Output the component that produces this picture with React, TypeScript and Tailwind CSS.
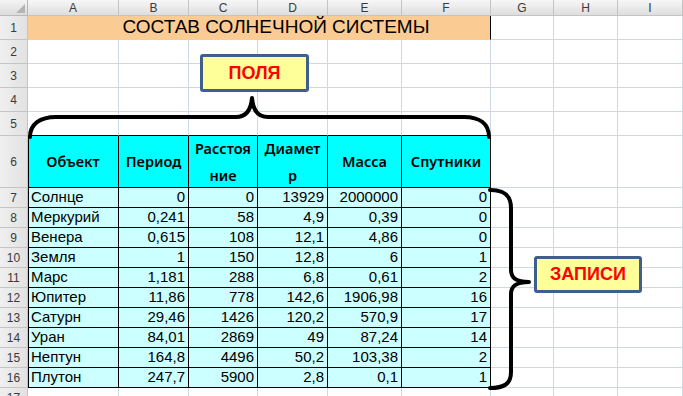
import React from "react";

const cols = ["A", "B", "C", "D", "E", "F", "G", "H", "I"];

const heads = ["Объект", "Период", "Расстоя\nние", "Диамет\nр", "Масса", "Спутники"];

const planets: string[][] = [
    ["Солнце", "0", "0", "13929", "2000000", "0"],
    ["Меркурий", "0,241", "58", "4,9", "0,39", "0"],
    ["Венера", "0,615", "108", "12,1", "4,86", "0"],
    ["Земля", "1", "150", "12,8", "6", "1"],
    ["Марс", "1,181", "288", "6,8", "0,61", "2"],
    ["Юпитер", "11,86", "778", "142,6", "1906,98", "16"],
    ["Сатурн", "29,46", "1426", "120,2", "570,9", "17"],
    ["Уран", "84,01", "2869", "49", "87,24", "14"],
    ["Нептун", "164,8", "4496", "50,2", "103,38", "2"],
    ["Плутон", "247,7", "5900", "2,8", "0,1", "1"],
];

function RowHead({ n }: { n: number }) {
    return (
        <div className="flex items-center justify-center bg-gradient-to-r from-[#efefef] to-[#e2e2e2] border-r border-b border-[#c4c4c4] text-[12px] text-[#3a3a3a]">
            {n}
        </div>
    );
}

function Empty({ black }: { black?: boolean }) {
    return <div className={`border-r border-b ${black ? "border-b-black border-r-[#d0d7e5]" : "border-[#d0d7e5]"}`} />;
}

export default function App() {
    return (
        <div
            className="relative w-[683px] h-[396px] overflow-hidden bg-white"
            style={{ fontFamily: '"Liberation Sans", Arial, sans-serif' }}
        >
            <div className="grid grid-cols-[28px_91px_70px_69px_70px_74px_89px_63px_64px_1fr] grid-rows-[16px_repeat(5,24px)_52px_repeat(10,20px)_20px]">
                {/* Column headers */}
                <div className="flex items-end justify-end p-[2px] bg-gradient-to-b from-[#f4f4f4] to-[#dcdcdc] border-r border-b border-[#b9b9b9]">
                    <div className="w-[9px] h-[9px] bg-[#b4b4b4] [clip-path:polygon(100%_0,100%_100%,0_100%)]" />
                </div>
                {cols.map((c) => (
                    <div
                        key={c}
                        className="flex items-center justify-center bg-gradient-to-b from-[#f7f7f7] to-[#dedede] border-r border-b border-[#c4c4c4] text-[12px] text-[#3a3a3a]"
                    >
                        {c}
                    </div>
                ))}

                {/* Row 1: title */}
                <RowHead n={1} />
                <div className="col-span-6 flex items-center justify-center pl-[34px] bg-[#fbcb94] border-r border-black border-b border-b-[#fbcb94] text-[19px] text-black">
                    СОСТАВ СОЛНЕЧНОЙ СИСТЕМЫ
                </div>
                <Empty />
                <Empty />
                <Empty />

                {/* Rows 2-5 */}
                {[2, 3, 4, 5].map((r) => (
                    <React.Fragment key={r}>
                        <RowHead n={r} />
                        {cols.map((c, i) => (
                            <Empty key={c} black={r === 5 && i < 6} />
                        ))}
                    </React.Fragment>
                ))}

                {/* Row 6: field names */}
                <RowHead n={6} />
                {heads.map((h, i) => (
                    <div
                        key={h}
                        className={`flex items-center justify-center text-center whitespace-pre-line bg-[#00ffff] border-r border-b border-black text-[14.5px] font-semibold leading-[27px] text-black ${i === 0 ? "shadow-[inset_1px_0_0_#000]" : ""}`}
                        style={{ fontFamily: '"Noto Sans", sans-serif' }}
                    >
                        {h}
                    </div>
                ))}
                <Empty />
                <Empty />
                <Empty />

                {/* Rows 7-16: records */}
                {planets.map((p, r) => (
                    <React.Fragment key={p[0]}>
                        <RowHead n={r + 7} />
                        {p.map((v, i) => (
                            <div
                                key={i}
                                className={`flex items-center bg-[#ccffff] border-r border-b border-black text-[15px] text-black ${
                                    i === 0 ? "justify-start pl-[3px] shadow-[inset_1px_0_0_#000]" : "justify-end pr-[3px]"
                                }`}
                            >
                                {v}
                            </div>
                        ))}
                        <Empty />
                        <Empty />
                        <Empty />
                    </React.Fragment>
                ))}

                {/* Row 17 */}
                <RowHead n={17} />
                {cols.map((c) => (
                    <Empty key={c} />
                ))}
            </div>

            {/* Braces over the sheet */}
            <svg className="absolute inset-0 pointer-events-none" width="683" height="396" viewBox="0 0 683 396">
                <path
                    d="M30,137 C30,124 40,117 56,117 L236,117 C246,117 251,110 252,98 C253,110 258,117 268,117 L464,117 C480,117 489,124 489,137"
                    fill="none"
                    stroke="#000"
                    strokeWidth="4"
                    strokeLinecap="round"
                    strokeLinejoin="round"
                />
                <path
                    d="M490,190 C504,190 511,195 511,208 L511,270 C511,278 516,282 529,282 C516,282 511,286 511,294 L511,372 C511,384 504,388 490,388"
                    fill="none"
                    stroke="#000"
                    strokeWidth="4"
                    strokeLinecap="round"
                    strokeLinejoin="round"
                />
            </svg>

            {/* Callouts */}
            <div className="absolute left-[200px] top-[54px] w-[109px] h-[38px] flex items-center justify-center bg-[#ffff99] border-[3px] border-[#3f5f8f] rounded-[3px] text-[18px] font-bold text-[#ff0000]">
                ПОЛЯ
            </div>
            <div className="absolute left-[534px] top-[256px] w-[108px] h-[37px] flex items-center justify-center bg-[#ffff99] border-[3px] border-[#3f5f8f] rounded-[3px] text-[18px] font-bold text-[#ff0000]">
                ЗАПИСИ
            </div>
        </div>
    );
}
